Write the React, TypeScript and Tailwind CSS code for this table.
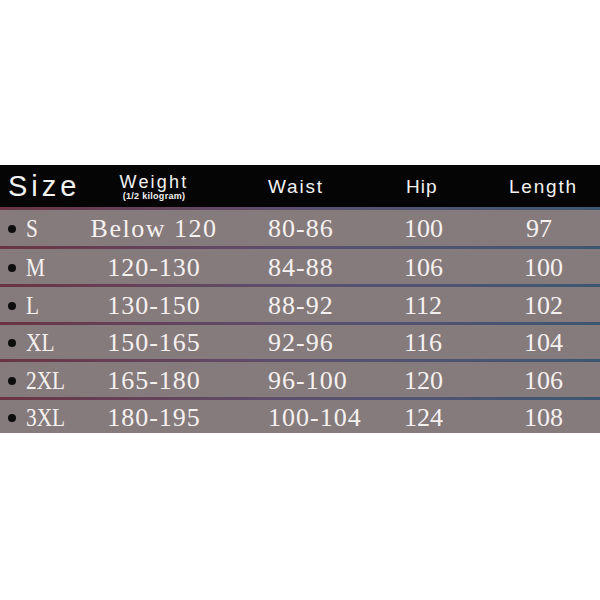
import React from "react";

const rows = [
  { size: "S", weight: "Below 120", waist: "80-86", hip: "100", length: "97", h: "h-[36px]", wide: true },
  { size: "M", weight: "120-130", waist: "84-88", hip: "106", length: "100", h: "h-[35px]" },
  { size: "L", weight: "130-150", waist: "88-92", hip: "112", length: "102", h: "h-[35px]" },
  { size: "XL", weight: "150-165", waist: "92-96", hip: "116", length: "104", h: "h-[34px]" },
  { size: "2XL", weight: "165-180", waist: "96-100", hip: "120", length: "106", h: "h-[35px]" },
  { size: "3XL", weight: "180-195", waist: "100-104", hip: "124", length: "108", h: "h-[33px]" },
];

function Separator() {
  return (
    <div className="h-[3px] w-full bg-linear-to-r from-[#6a3343] via-[#5c5070] to-[#3b5773]" />
  );
}

export default function App() {
  return (
    <div className="w-[600px] h-[600px] bg-white flex flex-col pt-[165px]">
      <div
        className="grid grid-cols-[80px_148px_176px_105px_1fr] h-[42px] bg-[#050505] text-[#f2f2f2] items-center"
        style={{ fontFamily: '"Liberation Sans", Arial, sans-serif' }}
      >
        <div className="pl-[8px] text-[29px] tracking-[4px] leading-none">Size</div>
        <div className="flex flex-col items-center leading-none pt-[2px]">
          <span className="text-[18px] tracking-[2.2px] leading-none">Weight</span>
          <span className="text-[9px] font-bold tracking-[0.3px] leading-none mt-[1px]">(1/2 kilogram)</span>
        </div>
        <div className="pl-[40px] text-[19px] tracking-[1.8px] leading-none">Waist</div>
        <div className="pl-[2px] text-[19px] tracking-[1px] leading-none">Hip</div>
        <div className="text-[19px] tracking-[1.8px] leading-none">Length</div>
      </div>
      <Separator />
      {rows.map((r, i) => (
        <React.Fragment key={r.size}>
          <div
            className={`grid grid-cols-[80px_148px_176px_105px_1fr] ${r.h} bg-[#857b7c] text-[#f6f1f1] items-center text-[26px] leading-none pt-[2px]`}
            style={{ fontFamily: '"Liberation Serif", "Times New Roman", serif' }}
          >
            <div className="flex items-center">
              <span className="ml-[8px] mr-[10px] w-[8px] h-[8px] rounded-full bg-[#0d0d0d] shrink-0" />
              <span className="inline-block scale-x-[0.82] origin-left">{r.size}</span>
            </div>
            <div className={`text-center ${r.wide ? "tracking-[1.5px]" : "tracking-[1px]"}`}>{r.weight}</div>
            <div className="pl-[40px] tracking-[1px]">{r.waist}</div>
            <div className="pl-[0px]">{r.hip}</div>
            <div className={r.length.length === 2 ? "pl-[17px]" : "pl-[15px]"}>{r.length}</div>
          </div>
          {i < rows.length - 1 && <Separator />}
        </React.Fragment>
      ))}
    </div>
  );
}
